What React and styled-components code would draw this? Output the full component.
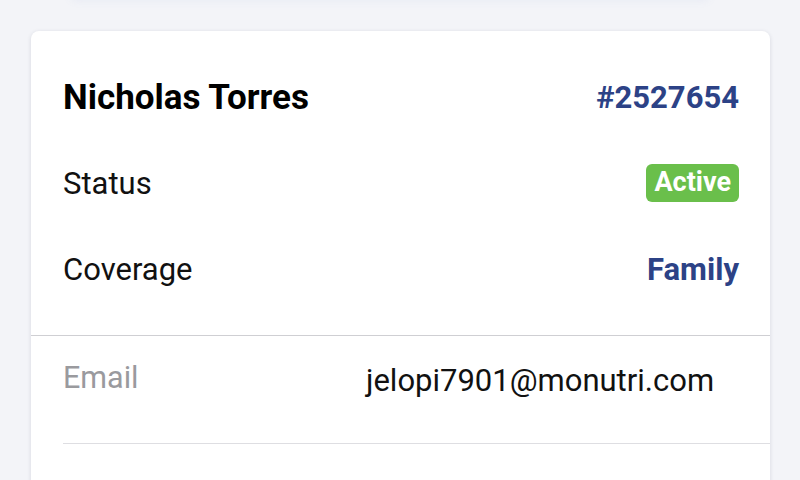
import React from "react";
import styled, { createGlobalStyle } from "styled-components";

const Global = createGlobalStyle`
  html, body { margin: 0; padding: 0; background: #f3f4f8; }
  body { font-family: Roboto, "Noto Sans", sans-serif; overflow: hidden; }
`;

const Page = styled.div`
  height: 480px;
  padding: 31px 30px 0 31px;
  box-sizing: border-box;
  overflow: hidden;
  position: relative;
`;

const TopGlow = styled.div`
  position: absolute;
  left: 70px;
  right: 90px;
  top: -12px;
  height: 12px;
  border-radius: 8px;
  box-shadow: 0 1px 8px rgba(120, 140, 210, 0.08);
`;

const Card = styled.div`
  background: #fff;
  border-radius: 8px;
  box-shadow: 0 1px 4px rgba(40, 50, 80, 0.14);
  height: 520px;
`;

const Summary = styled.div`
  padding: 23px 31px 23px 32px;
  border-bottom: 1px solid #cfcfd3;
  display: flex;
  flex-direction: column;
`;

const Row = styled.div`
  height: 86px;
  display: flex;
  align-items: center;
  justify-content: space-between;
`;

const Name = styled.div`
  font-size: 35px;
  font-weight: 700;
  color: #000;
`;

const Label = styled.div`
  font-size: 31px;
  color: #111;
`;

const Value = styled.div`
  font-size: 31px;
  font-weight: 700;
  color: #2c4286;
`;

const Badge = styled.div`
  background: #6abf4b;
  color: #fff;
  font-size: 27px;
  font-weight: 700;
  border-radius: 6px;
  padding: 3px 8px 4px;
  line-height: 31px;
`;

const DetailRow = styled.div`
  margin-left: 32px;
  height: 108px;
  display: grid;
  grid-template-columns: 303px 1fr;
  align-items: start;
  border-bottom: 1px solid #dedee2;
  box-sizing: border-box;
`;

const DetailLabel = styled.div`
  font-size: 30.5px;
  color: #9a9a9e;
  padding-top: 24px;
`;

const DetailValue = styled.div`
  font-size: 31px;
  color: #111;
  padding-top: 26px;
`;

export default function App() {
  return (
    <>
      <Global />
      <Page>
        <TopGlow />
        <Card>
          <Summary>
            <Row>
              <Name>Nicholas Torres</Name>
              <Value>#2527654</Value>
            </Row>
            <Row>
              <Label>Status</Label>
              <Badge>Active</Badge>
            </Row>
            <Row>
              <Label>Coverage</Label>
              <Value>Family</Value>
            </Row>
          </Summary>
          <DetailRow>
            <DetailLabel>Email</DetailLabel>
            <DetailValue>jelopi7901@monutri.com</DetailValue>
          </DetailRow>
        </Card>
      </Page>
    </>
  );
}
